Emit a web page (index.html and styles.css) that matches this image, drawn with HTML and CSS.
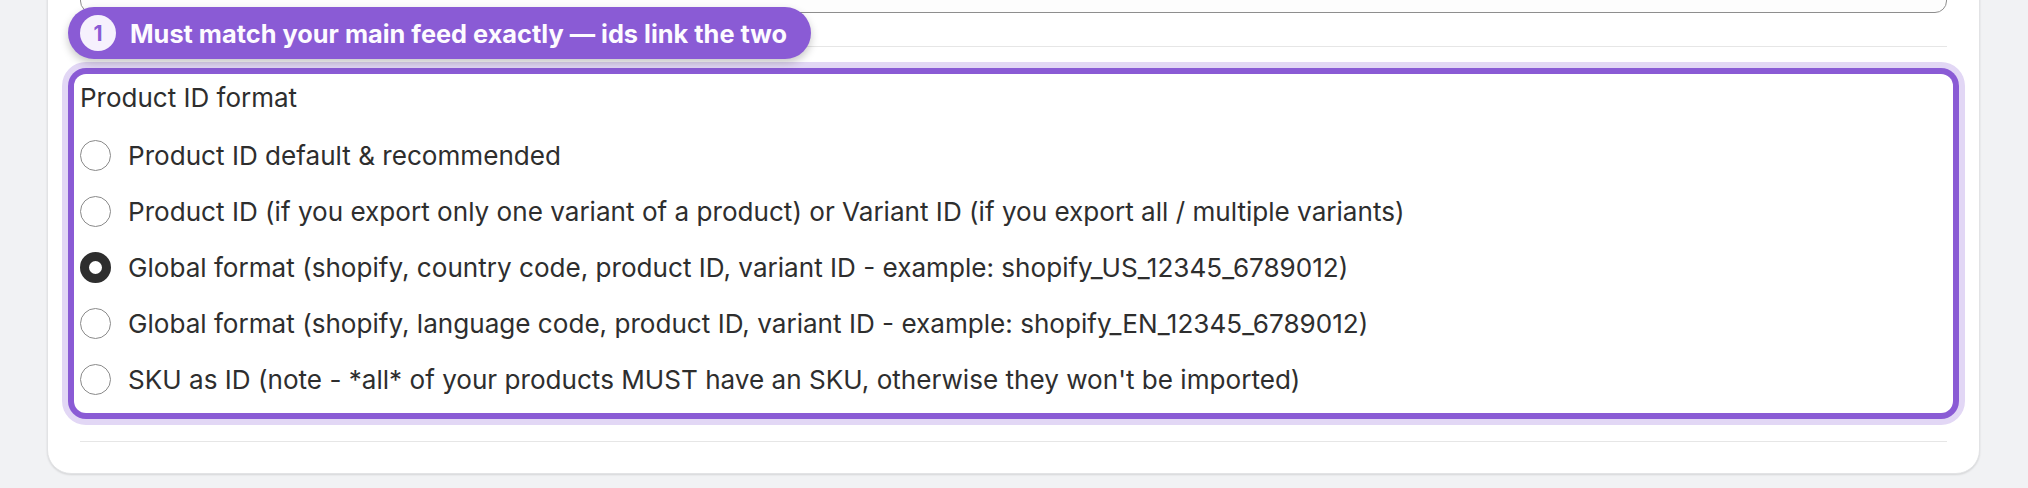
FILE: index.html
```html
<!DOCTYPE html>
<html lang="en">
<head>
<meta charset="utf-8">
<title>Product ID format</title>
<link rel="stylesheet" href="styles.css">
</head>
<body>
<div class="page">
  <div class="card">
    <div class="text-input"></div>
    <hr class="divider divider-top">
    <div class="field-wrap">
      <div class="tour-badge">
        <span class="tour-num">1</span>
        <span class="tour-text">Must match your main feed exactly — ids link the two</span>
      </div>
      <div class="field">
        <div class="field-label">Product ID format</div>
        <div class="options">
          <label class="option"><span class="radio"></span><span class="option-text">Product ID default &amp; recommended</span></label>
          <label class="option"><span class="radio"></span><span class="option-text">Product ID (if you export only one variant of a product) or Variant ID (if you export all / multiple variants)</span></label>
          <label class="option"><span class="radio checked"></span><span class="option-text">Global format (shopify, country code, product ID, variant ID - example: shopify_US_12345_6789012)</span></label>
          <label class="option"><span class="radio"></span><span class="option-text">Global format (shopify, language code, product ID, variant ID - example: shopify_EN_12345_6789012)</span></label>
          <label class="option"><span class="radio"></span><span class="option-text">SKU as ID (note - *all* of your products MUST have an SKU, otherwise they won't be imported)</span></label>
        </div>
      </div>
    </div>
    <hr class="divider divider-bottom">
  </div>
</div>
</body>
</html>
```
FILE: styles.css
```css
html, body {
  margin: 0;
  padding: 0;
  background: #f1f2f4;
  font-family: Inter, "Liberation Sans", sans-serif;
  color: #2e2e2e;
}

.page {
  padding: 0 48px 15px 47px;
}

.card {
  margin-top: -60px;
  background: #ffffff;
  border: 1px solid #e2e3e5;
  border-radius: 0 0 24px 24px;
  box-shadow: 0 1px 2px rgba(0, 0, 0, 0.12);
  padding: 32px 32px 31px 32px;
}

.text-input {
  height: 38px;
  border: 1px solid #8e8e8e;
  border-radius: 12px;
  background: #fdfdfd;
}

.divider {
  border: 0;
  height: 1px;
  background: #e6e6e6;
  margin: 0;
}

.divider-top {
  margin-top: 33px;
}

.divider-bottom {
  margin-top: 28px;
}

.field-wrap {
  position: relative;
  margin-top: 27px;
}

.field {
  margin: 0 -6px;
  padding: 6px 6px 12px 6px;
  background: #ffffff;
  border-radius: 12px;
  box-shadow: 0 0 0 6px #8a5bd5, 0 0 0 12px #e2d7f5;
}

.field-label {
  font-size: 26px;
  line-height: 36px;
}

.options {
  margin-top: 17px;
  display: flex;
  flex-direction: column;
  gap: 12px;
}

.option {
  display: flex;
  align-items: center;
  gap: 17px;
  height: 44px;
  font-size: 26.1px;
}

.radio {
  box-sizing: border-box;
  width: 31px;
  height: 31px;
  flex: none;
  border-radius: 50%;
  border: 1px solid #8a8a8a;
  background: #ffffff;
}

.radio.checked {
  border: 9.5px solid #2e2e2e;
}

.tour-badge {
  position: absolute;
  left: -12px;
  top: -67px;
  height: 52px;
  box-sizing: border-box;
  display: flex;
  align-items: center;
  gap: 14px;
  padding: 0 24px 0 12px;
  background: #8a5bd5;
  border-radius: 26px;
  box-shadow: 0 4px 8px rgba(0, 0, 0, 0.22);
  z-index: 2;
}

.tour-num {
  width: 36px;
  height: 36px;
  border-radius: 50%;
  background: #f6f1fd;
  color: #8a5bd5;
  font-weight: 700;
  font-size: 21px;
  display: flex;
  align-items: center;
  justify-content: center;
}

.tour-text {
  color: #fdfbff;
  font-weight: 700;
  font-size: 25.35px;
  white-space: nowrap;
}
```
